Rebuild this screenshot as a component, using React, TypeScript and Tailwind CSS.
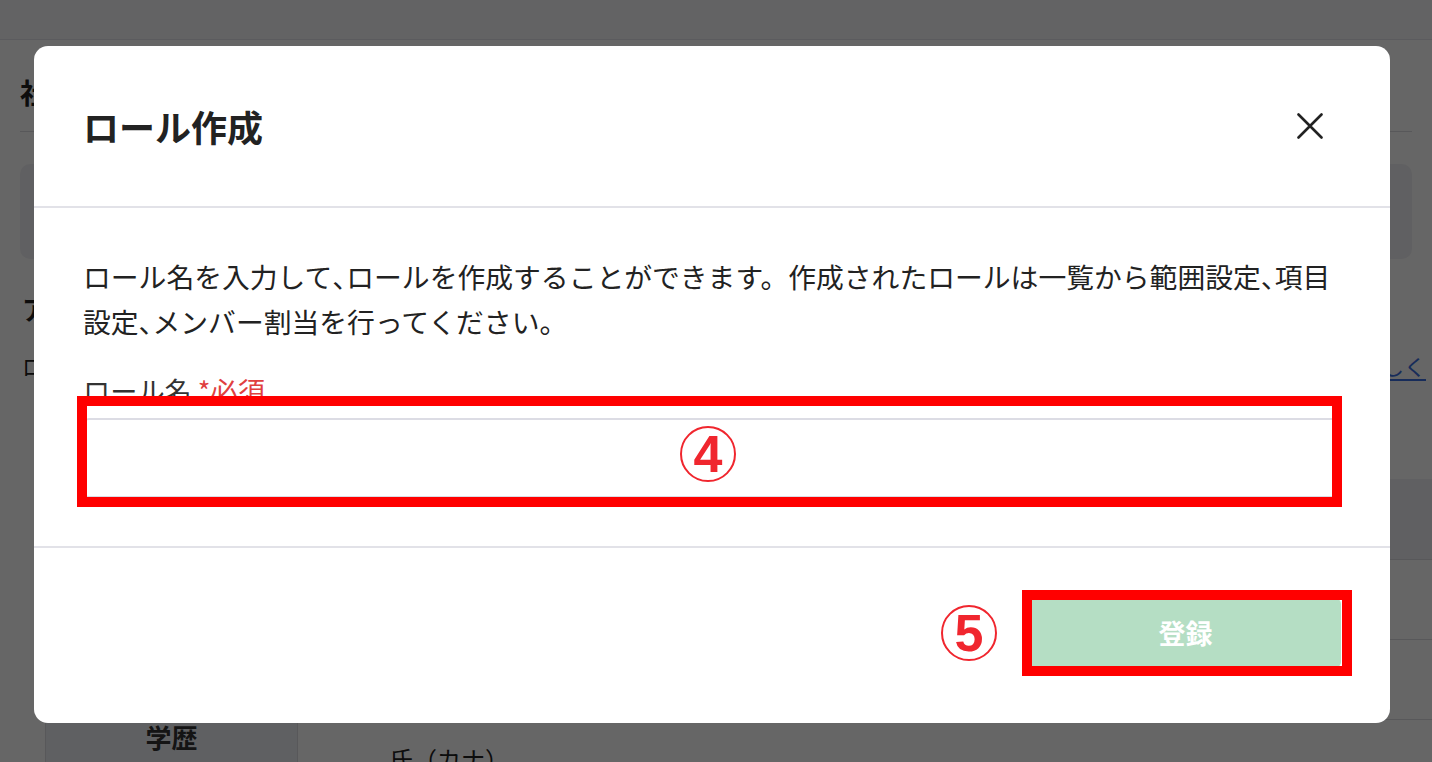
import React from "react";

function CloseIcon() {
  return (
    <svg viewBox="0 0 26 26" className="h-[26px] w-[26px]" fill="none">
      <path
        d="M1.5 1.5L24.5 24.5M24.5 1.5L1.5 24.5"
        stroke="#222222"
        strokeWidth="2.6"
        strokeLinecap="round"
      />
    </svg>
  );
}

function Marker({ n }: { n: string }) {
  return (
    <div className="flex h-[56px] w-[56px] items-center justify-center rounded-full border-2 border-[#f0262e] font-['Liberation_Sans',sans-serif] text-[52px] font-bold leading-none text-[#f0262e]">
      {n}
    </div>
  );
}

// half-width comma, as in the reference
const Comma = () => <span className="tracking-[-0.5em]">、</span>;

function BackgroundPage() {
  return (
    <div className="h-full">
      <header className="h-[40px] border-b border-[#e4e4ea] bg-[#f8f8fa]" />
      <main className="px-[20px]">
        <h1 className="mt-[34px] text-[28px] font-bold leading-[36px] text-[#222]">
          社員情報設定
        </h1>
        <div className="mt-[21px] border-t border-[#dcdce2]" />
        <div className="mt-[32px] h-[95px] rounded-[10px] bg-[#f1f1f4]" />
        <h2 className="mt-[33px] pl-[2px] text-[26px] font-bold leading-[34px] text-[#222]">
          アクセス権限
        </h2>
        <div className="-mr-[14px] mt-[24px] flex items-center justify-between pl-[2px] text-[22px] leading-[30px] text-[#222]">
          <span>ロールごとに閲覧・編集できる範囲を設定できます。</span>
          <a className="text-[#3b6fe0] underline underline-offset-[4px]">詳しく</a>
        </div>
        <div className="ml-[25px] mr-[-20px] mt-[99px] border-l border-[#dcdce2]">
          <div className="h-[80px] bg-[#f1f1f4]" />
          <div className="h-[80px] border-t border-[#dcdce2]" />
          <div className="h-[80px] border-t border-[#dcdce2]" />
          <div className="flex h-[80px] border-t border-[#dcdce2]">
            <div className="w-[252px] border-r border-[#dcdce2] bg-[#eef0f5] pt-[2px] text-center text-[26px] font-bold leading-[30px] text-[#333]">
              学歴
            </div>
            <div className="pl-[91px] pt-[24px] text-[24px] leading-[30px] text-[#222]">
              氏（カナ）
            </div>
          </div>
        </div>
      </main>
    </div>
  );
}

export default function App() {
  return (
    <div className="relative h-[762px] w-[1432px] overflow-hidden bg-white font-['Noto_Sans_CJK_JP',sans-serif]">
      <BackgroundPage />

      <div className="absolute inset-0 bg-black/60 pl-[34px] pr-[42px] pt-[46px]">
        <div className="rounded-[14px] bg-white">
          <div className="flex h-[162px] items-center justify-between border-b-2 border-[#e2e2e8] pl-[49px] pr-[67px]">
            <h2 className="text-[36px] font-bold leading-[48px] text-[#222]">ロール作成</h2>
            <button className="flex items-center justify-center">
              <CloseIcon />
            </button>
          </div>

          <div className="border-b-2 border-[#e2e2e8] px-[49px] pb-[48px] pt-[46px]">
            <p className="text-[27.8px] leading-[45px] text-[#222]">
              ロール名を入力して<Comma />ロールを作成することができます。作成されたロールは一覧から範囲設定<Comma />項目設定<Comma />メンバー割当を行ってください。
            </p>
            <label className="mb-[10px] mt-[28px] block text-[27.2px] leading-[36px] text-[#333]">
              ロール名 <span className="text-[#e0403f]">*必須</span>
            </label>
            <div className="relative">
              <input className="block h-[80px] w-full rounded-[6px] border-2 border-[#dcdce4] px-[16px] text-[27px] outline-none" />
              <div className="pointer-events-none absolute -bottom-[9px] -left-[6px] -right-[1px] -top-[22px] border-[10px] border-[#ff0000]" />
              <div className="pointer-events-none absolute inset-0 flex items-center justify-center pb-[8px] pr-[8px]">
                <Marker n="4" />
              </div>
            </div>
          </div>

          <div className="flex items-center justify-end gap-[33px] px-[49px] pb-[55px] pt-[50px]">
            <Marker n="5" />
            <div className="relative">
              <button className="h-[70px] w-[311px] rounded-[6px] bg-[#b5dec4] text-[27px] font-bold text-white">
                登録
              </button>
              <div className="pointer-events-none absolute -bottom-[8px] -left-[8px] -right-[11px] -top-[8px] border-[10px] border-[#ff0000]" />
            </div>
          </div>
        </div>
      </div>
    </div>
  );
}
